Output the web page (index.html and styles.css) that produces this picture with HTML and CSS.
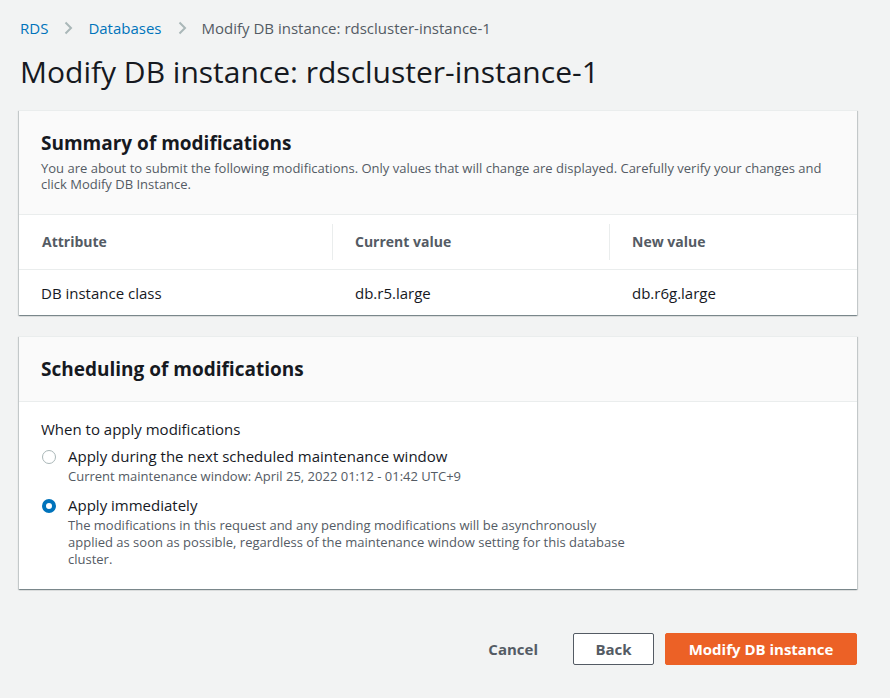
FILE: index.html
```html
<!DOCTYPE html>
<html>
<head>
<meta charset="utf-8">
<link rel="stylesheet" href="styles.css">
</head>
<body>
<div class="page">
  <nav class="crumbs">
    <a class="crumb-link">RDS</a>
    <svg class="chev" width="16" height="16" viewBox="0 0 16 16"><path d="M5.5 2.5 11 8l-5.5 5.5" fill="none" stroke="#aab7b8" stroke-width="2"/></svg>
    <a class="crumb-link">Databases</a>
    <svg class="chev" width="16" height="16" viewBox="0 0 16 16"><path d="M5.5 2.5 11 8l-5.5 5.5" fill="none" stroke="#aab7b8" stroke-width="2"/></svg>
    <span class="crumb-current">Modify DB instance: rdscluster-instance-1</span>
  </nav>
  <h1 class="title">Modify DB instance: rdscluster-instance-1</h1>

  <section class="card">
    <div class="card-head summary-head">
      <h2 class="card-title">Summary of modifications</h2>
      <p class="card-desc">You are about to submit the following modifications. Only values that will change are displayed. Carefully verify your changes and click Modify DB Instance.</p>
    </div>
    <div class="table">
      <div class="th-row">
        <div class="th c1">Attribute</div>
        <div class="th c2"><span class="sep"></span>Current value</div>
        <div class="th c3"><span class="sep"></span>New value</div>
      </div>
      <div class="td-row">
        <div class="td c1">DB instance class</div>
        <div class="td c2">db.r5.large</div>
        <div class="td c3">db.r6g.large</div>
      </div>
    </div>
  </section>

  <section class="card">
    <div class="card-head sched-head">
      <h2 class="card-title">Scheduling of modifications</h2>
    </div>
    <div class="card-body">
      <div class="field-label">When to apply modifications</div>
      <div class="radio">
        <span class="rb"></span>
        <div class="radio-text">
          <div class="radio-label">Apply during the next scheduled maintenance window</div>
          <div class="radio-desc">Current maintenance window: April 25, 2022 01:12 - 01:42 UTC+9</div>
        </div>
      </div>
      <div class="radio">
        <span class="rb checked"></span>
        <div class="radio-text">
          <div class="radio-label">Apply immediately</div>
          <div class="radio-desc narrow">The modifications in this request and any pending modifications will be asynchronously applied as soon as possible, regardless of the maintenance window setting for this database cluster.</div>
        </div>
      </div>
    </div>
  </section>

  <div class="actions">
    <button class="btn link">Cancel</button>
    <button class="btn normal">Back</button>
    <button class="btn primary">Modify DB instance</button>
  </div>
</div>
</body>
</html>
```

FILE: styles.css
```css
* { box-sizing: border-box; }
html, body { margin: 0; padding: 0; }
body {
  background: #f2f3f3;
  font-family: "Open Sans", "Noto Sans", Arial, sans-serif;
  color: #16191f;
  width: 890px;
  height: 698px;
  overflow: hidden;
}
.page { padding: 17px 33px 0 20px; }
.crumbs { display: flex; align-items: center; height: 22px; font-size: 15px; }
.crumb-link { color: #0073bb; }
.chev { margin: 0 12px 0 12px; }
.crumb-current { color: #545b64; }
.title {
  font-size: 30px;
  font-weight: 400;
  margin: 15px 0 0 0;
  line-height: 36px;
  color: #16191f;
}
.card {
  margin-top: 20px;
  margin-left: -1px;
  background: #fff;
  border-top: 1px solid #eaeded;
  box-shadow: 0 1px 1px 0 rgba(0,28,36,.3), 1px 1px 1px 0 rgba(0,28,36,.15), -1px 1px 1px 0 rgba(0,28,36,.15);
}
.card + .card { margin-top: 21px; }
.card-head { background: #fafafa; border-bottom: 1px solid #eaeded; padding: 0 22px; }
.summary-head { padding-top: 20px; height: 104px; }
.sched-head { height: 65px; padding-top: 20px; }
.card-title { margin: 0; font-size: 19px; font-weight: 700; line-height: 24px; }
.card-desc { margin: 5px 0 0; font-size: 13px; line-height: 16px; color: #545b64; }
.table { font-size: 15px; }
.th-row { display: flex; height: 55px; border-bottom: 1px solid #eaeded; align-items: center; }
.td-row { display: flex; height: 45px; align-items: center; }
.c1 { width: 313px; padding-left: 23px; }
.c2 { width: 277px; padding-left: 23px; }
.c3 { flex: 1; padding-left: 23px; }
.td.c1 { padding-left: 22px; }
.th { font-size: 14px; font-weight: 700; color: #545b64; position: relative; line-height: 20px; }
.sep { position: absolute; left: 0; top: -8px; width: 1px; height: 36px; background: #eaeded; }
.td { line-height: 20px; }
.card-body { padding: 17px 22px 21px; }
.field-label { font-size: 15px; line-height: 20px; }
.radio { display: flex; margin-top: 7px; }
.radio + .radio { margin-top: 10px; }
.rb {
  width: 14px; height: 14px; border-radius: 50%;
  border: 1px solid #aab7b8; margin: 4px 12px 0 1px; flex: none; background: #fff;
}
.rb.checked { border: 4px solid #0073bb; }
.radio-label { font-size: 15px; line-height: 20px; }
.radio-desc { font-size: 13px; line-height: 17px; color: #545b64; margin-top: 2px; }
.narrow { width: 560px; }
.actions { display: flex; justify-content: flex-end; align-items: center; margin-top: 44px; gap: 11px; }
.btn {
  font-family: inherit; font-size: 15px; font-weight: 700; height: 32px;
  border-radius: 2px; padding: 0 16px; line-height: 30px; cursor: pointer;
}
.btn.link { background: none; border: 1px solid transparent; color: #545b64; margin-right: 7px; }
.btn.normal { background: #fff; border: 1px solid #545b64; color: #545b64; width: 81px; }
.btn.primary { background: #ec6126; border: 1px solid #ec6126; color: #fff; width: 192px; }
```
